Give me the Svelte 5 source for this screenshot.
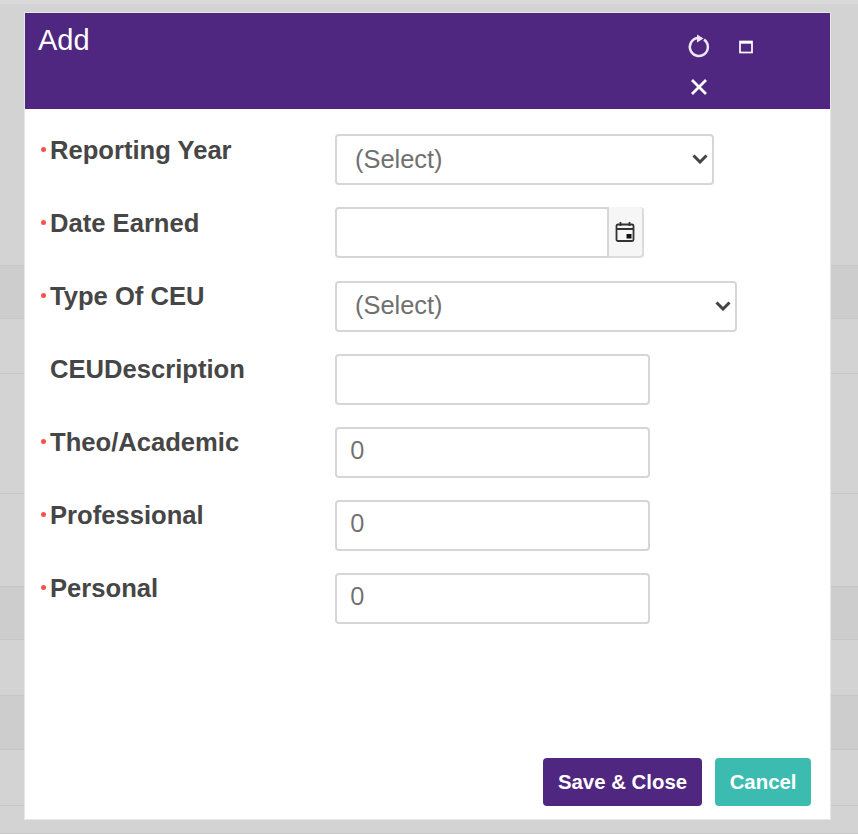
<script lang="ts">
	const bands = [
		{ height: 4, dark: false, light: true },
		{ height: 262, dark: false },
		{ height: 53, dark: true },
		{ height: 55, dark: false },
		{ height: 120, dark: false },
		{ height: 93, dark: false },
		{ height: 53, dark: true },
		{ height: 56, dark: false },
		{ height: 54, dark: true },
		{ height: 56, dark: false },
		{ height: 28, dark: false },
	];

	const fields = [
		{ label: 'Reporting Year', required: true, kind: 'select', width: 379 },
		{ label: 'Date Earned', required: true, kind: 'date', width: 274 },
		{ label: 'Type Of CEU', required: true, kind: 'select', width: 402 },
		{ label: 'CEUDescription', required: false, kind: 'text', width: 315, value: '' },
		{ label: 'Theo/Academic', required: true, kind: 'text', width: 315, value: '0' },
		{ label: 'Professional', required: true, kind: 'text', width: 315, value: '0' },
		{ label: 'Personal', required: true, kind: 'text', width: 315, value: '0' },
	];
</script>

<div class="page">
	{#each bands as band}
		<div class="band" class:dark={band.dark} class:light={band.light} style="height: {band.height}px"></div>
	{/each}

	<div class="modal">
		<header>
			<h1>Add</h1>
			<div class="tools">
				<button class="tool" aria-label="Refresh">
					<svg width="24" height="24" viewBox="0 0 24 24" fill="none" stroke="#ebe6f2" stroke-width="2.5">
						<path d="M17 4.6A9 9 0 1 1 10.5 3.1" />
						<path d="M10 -.5L16.5 3.5L10 7.5z" fill="#ebe6f2" stroke="none" />
					</svg>
				</button>
				<button class="tool" aria-label="Maximize">
					<svg width="14" height="14" viewBox="0 0 14 14" fill="none" stroke="#fff">
						<rect x="1" y="1.5" width="12" height="11" stroke-width="1.7" />
						<path d="M1 2.5h12" stroke-width="2.4" />
					</svg>
				</button>
				<button class="tool" aria-label="Close">
					<svg width="18" height="18" viewBox="0 0 18 18" stroke="#fff" stroke-width="2.8">
						<path d="M2 2l14 14M16 2L2 16" />
					</svg>
				</button>
			</div>
		</header>

		<form>
			{#each fields as field}
				<div class="row">
					<div class="label">
						<span class="mark">
							{#if field.required}<i class="dot"></i>{/if}
						</span>
						<span>{field.label}</span>
					</div>
					{#if field.kind === 'select'}
						<div class="select" style="width: {field.width}px">
							<select>
								<option>(Select)</option>
							</select>
							<svg class="chevron" width="16" height="10" viewBox="0 0 16 10" fill="none" stroke="#444" stroke-width="3">
								<path d="M1.5 1.5L8 8l6.5-6.5" />
							</svg>
						</div>
					{:else if field.kind === 'date'}
						<div class="date" style="width: {field.width + 35}px">
							<input type="text" />
							<span class="addon">
								<svg width="20" height="22" viewBox="0 0 20 22" fill="none" stroke="#333" stroke-width="1.8">
									<rect x="1.5" y="3.5" width="17" height="16.5" rx="1.5" />
									<path d="M1.5 8h17M5.5 1v4M14.5 1v4" />
									<rect x="11.5" y="13" width="5" height="4.5" fill="#111" stroke="none" />
								</svg>
							</span>
						</div>
					{:else}
						<input type="text" placeholder={field.value} style="width: {field.width}px" />
					{/if}
				</div>
			{/each}
		</form>

		<footer>
			<button class="btn save">Save &amp; Close</button>
			<button class="btn cancel">Cancel</button>
		</footer>
	</div>
</div>

<style>
	:global(body) {
		margin: 0;
		background: #d3d3d3;
	}

	.page {
		position: relative;
		height: 834px;
		overflow: hidden;
		font-family: 'Liberation Sans', Arial, sans-serif;
	}

	.band {
		box-sizing: border-box;
		border-bottom: 1px solid #c6c6c6;
		background: #d3d3d3;
	}

	.band.dark {
		background: #cdcdcd;
	}

	.band.light {
		border-bottom: none;
		background: #d9d9d9;
	}

	.modal {
		position: absolute;
		top: 13px;
		left: 25px;
		box-sizing: border-box;
		display: flex;
		flex-direction: column;
		width: 805px;
		height: 806px;
		background: #fff;
		box-shadow: 0 0 0 1px #e6e6e6;
	}

	header {
		display: flex;
		justify-content: space-between;
		box-sizing: border-box;
		height: 96px;
		padding: 11px 0 0 13px;
		background: #4f2680;
		color: #fff;
	}

	h1 {
		margin: 0;
		font-size: 29px;
		font-weight: 400;
	}

	.tools {
		display: grid;
		grid-template-columns: 47px 47px;
		grid-auto-rows: 40px;
		align-content: start;
		margin: 11px 49px 0 0;
	}

	.tool {
		display: flex;
		align-items: center;
		justify-content: center;
		width: 24px;
		height: 24px;
		border: none;
		padding: 0;
		background: none;
	}

	.tool svg {
		overflow: visible;
	}

	form {
		display: flex;
		flex: 1;
		flex-direction: column;
		gap: 22.1px;
		padding: 25.4px 0 0 15px;
	}

	.row {
		display: flex;
		height: 51px;
	}

	.label {
		display: flex;
		width: 295px;
		padding-top: 0.5px;
		color: #464646;
		font-size: 25.6px;
		font-weight: 700;
		line-height: 30px;
	}

	.mark {
		display: block;
		flex: none;
		width: 10px;
	}

	.dot {
		display: block;
		width: 5px;
		height: 5px;
		margin: 12px 0 0 1px;
		border-radius: 50%;
		background: #f8524a;
	}

	.select {
		position: relative;
		height: 51px;
	}

	select,
	input {
		box-sizing: border-box;
		height: 51px;
		border: 2px solid #d6d6d6;
		border-radius: 4px;
		background: #fff;
		color: #707070;
		font: 25.6px 'Open Sans', sans-serif;
	}

	select {
		appearance: none;
		width: 100%;
		padding: 0 0 2px 18px;
		font: 25.4px 'Liberation Sans', sans-serif;
	}

	.chevron {
		position: absolute;
		top: 20px;
		right: 6px;
	}

	input {
		padding: 0 13px 5px;
	}

	input::placeholder {
		color: #707070;
		opacity: 1;
	}

	.date {
		display: flex;
		box-sizing: border-box;
	}

	.date input {
		width: 274px;
		border-radius: 4px 0 0 4px;
	}

	.addon {
		display: flex;
		align-items: center;
		justify-content: center;
		box-sizing: border-box;
		width: 35px;
		height: 51px;
		padding-right: 2px;
		border-right: 2px solid #dcdcdc;
		border-bottom: 2px solid #dcdcdc;
		border-radius: 0 4px 4px 0;
		background: #f6f6f6;
	}

	footer {
		display: flex;
		justify-content: flex-end;
		gap: 13px;
		padding: 0 19px 13px 0;
	}

	.btn {
		height: 48px;
		border: none;
		border-radius: 4px;
		padding: 0 15px;
		color: #fff;
		font: 700 20.4px 'Liberation Sans', sans-serif;
	}

	.save {
		background: #4f2680;
	}

	.cancel {
		padding: 0 14.5px;
		background: #3cbcb0;
	}
</style>
